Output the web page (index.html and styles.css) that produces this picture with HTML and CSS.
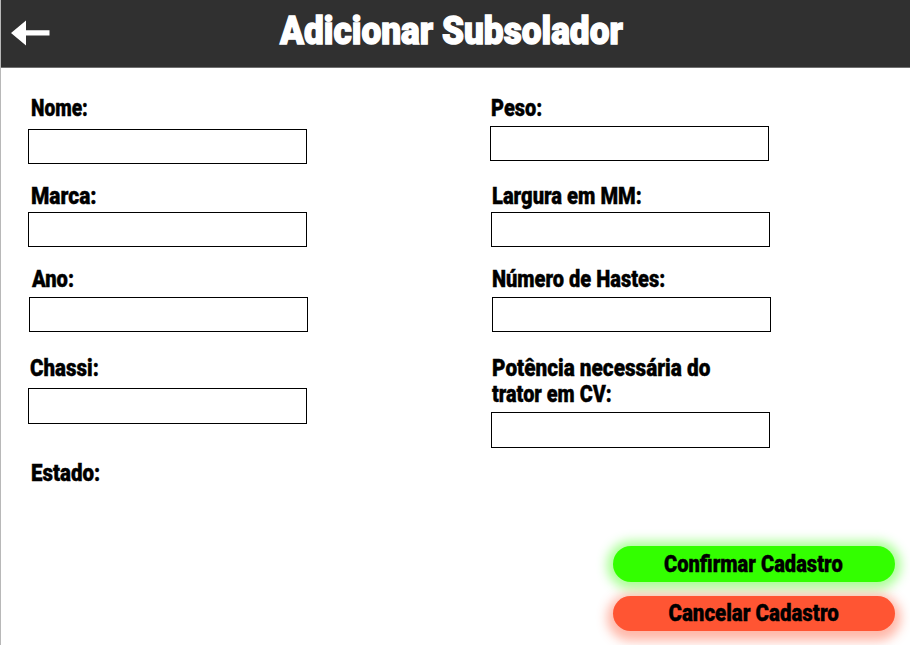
FILE: index.html
```html
<!DOCTYPE html>
<html lang="pt-BR">
<head>
<meta charset="utf-8">
<title>Adicionar Subsolador</title>
<link rel="stylesheet" href="styles.css">
</head>
<body>
<header class="header">
  <a class="back" aria-label="Voltar"><svg width="39" height="26" viewBox="0 0 39 26"><path d="M0 13 15 0.5V10.3H38.5V15.5H15V25.5Z" fill="#fff"/></svg></a>
  <h1 class="title"><span class="fit" data-width="343">Adicionar Subsolador</span></h1>
</header>
<main class="form">
  <div class="column">
    <div class="field nome"><label for="nome"><span class="fit" data-width="57">Nome:</span></label><input id="nome"></div>
    <div class="field marca"><label for="marca"><span class="fit" data-width="66">Marca:</span></label><input id="marca"></div>
    <div class="field ano"><label for="ano"><span class="fit" data-width="42">Ano:</span></label><input id="ano"></div>
    <div class="field chassi"><label for="chassi"><span class="fit" data-width="69">Chassi:</span></label><input id="chassi"></div>
    <div class="field estado"><label><span class="fit" data-width="69">Estado:</span></label></div>
  </div>
  <div class="column right">
    <div class="field peso"><label for="peso"><span class="fit" data-width="51">Peso:</span></label><input id="peso"></div>
    <div class="field largura"><label for="largura"><span class="fit" data-width="150">Largura em MM:</span></label><input id="largura"></div>
    <div class="field hastes"><label for="hastes"><span class="fit" data-width="173">Número de Hastes:</span></label><input id="hastes"></div>
    <div class="field potencia"><label for="potencia"><span class="fit" data-width="218">Potência necessária do</span><br><span class="fit" data-width="120">trator em CV:</span></label><input id="potencia"></div>
  </div>
</main>
<div class="actions">
  <button class="confirm"><span class="fit" data-width="179">Confirmar Cadastro</span></button>
  <button class="cancel"><span class="fit" data-width="170">Cancelar Cadastro</span></button>
</div>
<script src="fit.js"></script>
</body>
</html>
```
FILE: styles.css
```css
* { box-sizing: border-box; }
body {
  margin: 0;
  width: 910px;
  height: 645px;
  overflow: hidden;
  display: flex;
  flex-direction: column;
  border-left: 1px solid #b8b8b8;
  background: #fff;
  color: #000;
  font: 900 23.5px/26px Roboto, "Liberation Sans", sans-serif;
  -webkit-text-stroke: 0.4px currentColor;
}
.header {
  flex: none;
  height: 68px;
  margin-left: -1px;
  display: flex;
  align-items: flex-start;
  background: #303030;
  border-bottom: 1px solid #707070;
}
.back { width: 269px; padding: 20px 0 0 11px; }
.back svg { display: block; }
.title { margin: 8px 0 0 11px; font-size: 39px; line-height: 46px; font-weight: 900; color: #fff; white-space: nowrap; -webkit-text-stroke: 1.4px #fff; }
.fit { display: inline-block; transform-origin: left center; white-space: nowrap; }
.form { flex: none; display: flex; height: 478px; }
.column { flex: none; width: 462px; padding: 27px 0 0 27px; }
.right { width: 447px; }
.field { display: flex; flex-direction: column; align-items: flex-start; }
.field label { display: block; padding-left: 3px; }
.field input { width: 279px; height: 35px; margin: 0; padding: 0 8px; border: 1px solid #000; border-radius: 0; background: #fff; font: inherit; outline: none; }
.nome { height: 88px; gap: 8px; }
.marca { height: 83px; gap: 3px; }
.ano { height: 89px; gap: 5px; padding-left: 1px; }
.chassi { height: 105px; gap: 7px; }
.chassi label { padding-left: 2px; }
.chassi input, .potencia input { height: 36px; }
.peso { height: 88px; gap: 5px; }
.right label { padding-left: 1px; }
.largura { height: 83px; gap: 3px; padding-left: 1px; }
.hastes { height: 89px; gap: 5px; padding-left: 2px; }
.hastes label { padding-left: 0; }
.potencia { gap: 5px; padding-left: 1px; }
.actions { width: 282px; margin-left: 612px; display: flex; flex-direction: column; gap: 14px; }
.actions button { height: 35.5px; padding: 0; border: 0; border-radius: 18px; color: #000; font: inherit; text-align: center; }
.actions .fit { transform-origin: center; }
.confirm { background: #3f0; box-shadow: 0 1px 11px 6px rgba(51, 255, 0, .42); }
.cancel { background: #ff5533; box-shadow: 0 4px 11px 6px rgba(255, 85, 51, .42); }
.confirm .fit { margin-left: -2px; }
```
FILE: fit.js
```js
document.querySelectorAll('.fit').forEach(function (el) {
  el.style.transform = 'scaleX(' + el.dataset.width / el.offsetWidth + ')';
});
```
